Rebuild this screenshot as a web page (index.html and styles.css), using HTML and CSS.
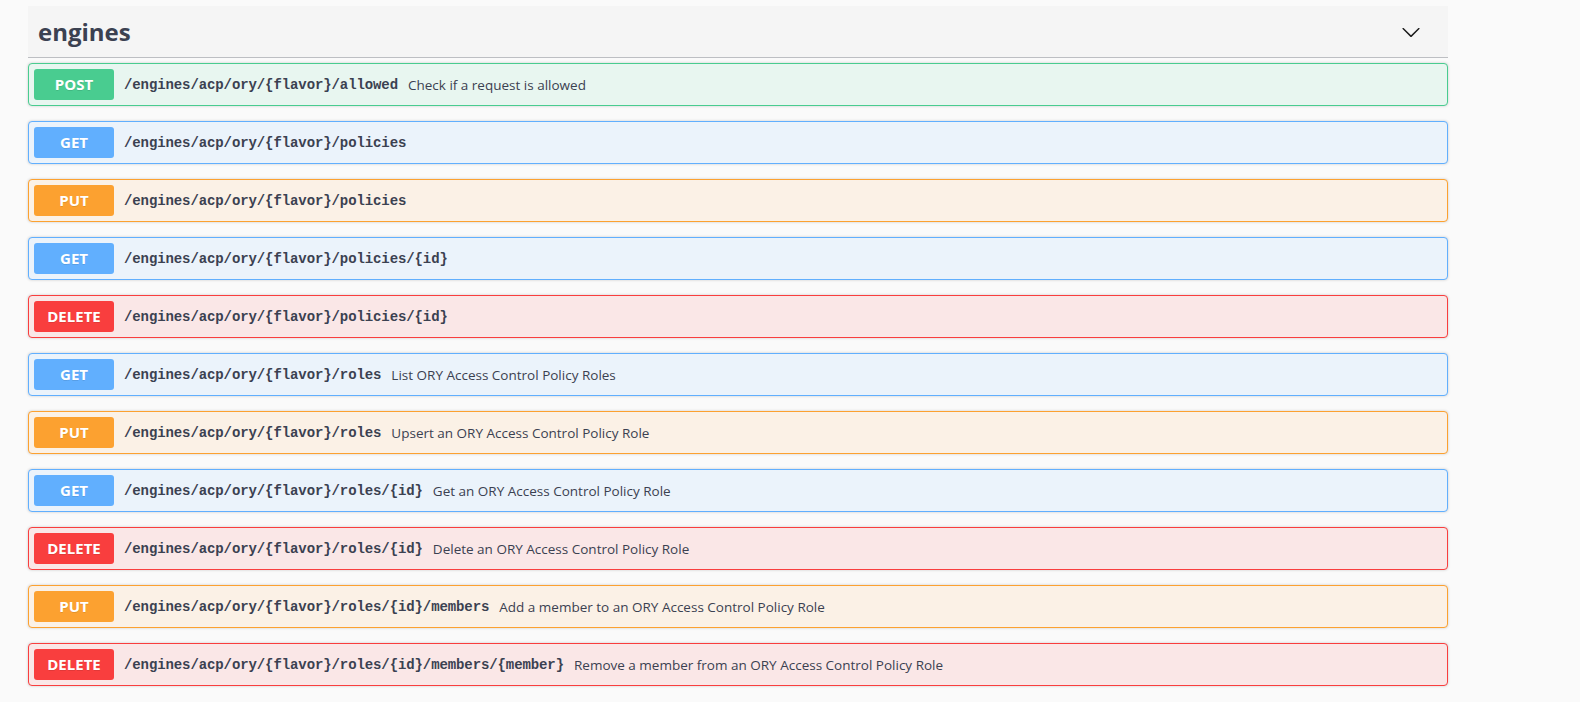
FILE: index.html
```html
<!DOCTYPE html>
<html>
<head>
<meta charset="utf-8">
<link rel="stylesheet" href="styles.css">
</head>
<body>
<div class="wrapper">
  <div class="tag">
    <h3 class="tag-title">engines</h3>
    <svg class="arrow" width="20" height="20" viewBox="0 0 20 20"><path d="M17.418 6.109c.272-.268.709-.268.979 0s.271.701 0 .969l-7.908 7.83c-.27.268-.707.268-.979 0l-7.908-7.83c-.27-.268-.27-.701 0-.969.271-.268.709-.268.979 0L10 13.25l7.418-7.141z"/></svg>
  </div>
  <div class="ops">
    <div class="op post"><span class="method">POST</span><span class="path">/engines/acp/ory/{flavor}/allowed</span><span class="desc">Check if a request is allowed</span></div>
    <div class="op get"><span class="method">GET</span><span class="path">/engines/acp/ory/{flavor}/policies</span><span class="desc"></span></div>
    <div class="op put"><span class="method">PUT</span><span class="path">/engines/acp/ory/{flavor}/policies</span><span class="desc"></span></div>
    <div class="op get"><span class="method">GET</span><span class="path">/engines/acp/ory/{flavor}/policies/{id}</span><span class="desc"></span></div>
    <div class="op delete"><span class="method">DELETE</span><span class="path">/engines/acp/ory/{flavor}/policies/{id}</span><span class="desc"></span></div>
    <div class="op get"><span class="method">GET</span><span class="path">/engines/acp/ory/{flavor}/roles</span><span class="desc">List ORY Access Control Policy Roles</span></div>
    <div class="op put"><span class="method">PUT</span><span class="path">/engines/acp/ory/{flavor}/roles</span><span class="desc">Upsert an ORY Access Control Policy Role</span></div>
    <div class="op get"><span class="method">GET</span><span class="path">/engines/acp/ory/{flavor}/roles/{id}</span><span class="desc">Get an ORY Access Control Policy Role</span></div>
    <div class="op delete"><span class="method">DELETE</span><span class="path">/engines/acp/ory/{flavor}/roles/{id}</span><span class="desc">Delete an ORY Access Control Policy Role</span></div>
    <div class="op put"><span class="method">PUT</span><span class="path">/engines/acp/ory/{flavor}/roles/{id}/members</span><span class="desc">Add a member to an ORY Access Control Policy Role</span></div>
    <div class="op delete"><span class="method">DELETE</span><span class="path">/engines/acp/ory/{flavor}/roles/{id}/members/{member}</span><span class="desc">Remove a member from an ORY Access Control Policy Role</span></div>
  </div>
</div>
</body>
</html>
```
FILE: styles.css
```css
html, body {
  margin: 0;
  padding: 0;
  background: #fafafa;
}
body {
  font-family: "Open Sans", "Liberation Sans", sans-serif;
  color: #3b4151;
}
.wrapper {
  width: 1420px;
  padding: 6px 0 0 28px;
}
.tag {
  display: flex;
  align-items: center;
  justify-content: space-between;
  background: #f5f5f5;
  padding: 10px 27px 10px 10px;
  border-bottom: 1px solid rgba(59, 65, 81, 0.3);
  margin-bottom: 5px;
}
.tag-title {
  margin: 0;
  font-size: 24px;
  line-height: 31px;
  font-weight: 700;
  color: #3b4151;
}
.arrow {
  fill: #1a1a1a;
  display: block;
}
.op {
  display: flex;
  align-items: center;
  padding: 5px;
  border: 1px solid;
  border-radius: 4px;
  box-shadow: 0 0 3px rgba(0, 0, 0, 0.19);
  margin-bottom: 15px;
}
.method {
  min-width: 80px;
  box-sizing: border-box;
  padding: 0 10px;
  height: 31px;
  line-height: 31px;
  text-align: center;
  color: #fff;
  font-size: 15px;
  font-weight: 700;
  border-radius: 3px;
  text-shadow: 0 1px 0 rgba(0, 0, 0, 0.1);
}
.path {
  padding: 0 10px;
  font-family: "Liberation Mono", "DejaVu Sans Mono", monospace;
  font-size: 14px;
  letter-spacing: -0.1px;
  font-weight: 700;
  color: #3b4151;
}
.desc {
  font-size: 13.5px;
  color: #3b4151;
}
.post { background: #e8f6f0; border-color: #49cc90; }
.post .method { background: #49cc90; }
.get { background: #ebf3fb; border-color: #61affe; }
.get .method { background: #61affe; }
.put { background: #fbf1e6; border-color: #fca130; }
.put .method { background: #fca130; }
.delete { background: #fae7e7; border-color: #f93e3e; }
.delete .method { background: #f93e3e; }
```
